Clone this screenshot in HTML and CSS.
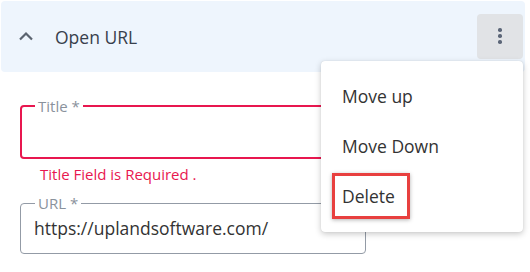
FILE: index.html
```html
<!DOCTYPE html>
<html lang="en">
<head>
  <meta charset="UTF-8" />
  <title>Open URL</title>
  <link rel="stylesheet" href="styles.css">
</head>
<body>

<div class="panel">
  <div class="panel-head">
    <svg class="chevron" width="16" height="10" viewBox="0 0 16 10">
      <path d="M2 8.5 L8 2.5 L14 8.5" fill="none" stroke="#5b6470" stroke-width="2.2" />
    </svg>
    <span class="panel-title">Open URL</span>
    <button class="kebab" type="button">
      <span class="dot"></span><span class="dot"></span><span class="dot"></span>
    </button>
  </div>

  <div class="form">
    <fieldset class="field invalid">
      <legend>Title *</legend>
      <div class="field-value"></div>
    </fieldset>
    <div class="error">Title Field is Required .</div>

    <fieldset class="field">
      <legend>URL *</legend>
      <div class="field-value">https://uplandsoftware.com/</div>
    </fieldset>
  </div>

  <!-- menu opened from the kebab button -->
  <ul class="menu">
    <li class="menu-item">Move up</li>
    <li class="menu-item">Move Down</li>
    <li class="menu-item"><span class="mark">Delete</span></li>
  </ul>
</div>

</body>
</html>
```

FILE: styles.css
```css
* {
  margin: 0;
  padding: 0;
  box-sizing: border-box;
}

html, body {
  background: #fff;
  font-family: 'Open Sans', 'Noto Sans', sans-serif;
  color: #333;
}

.panel {
  position: relative;
  width: 530px;
  height: 272px;
  overflow: hidden;
}

.panel-head {
  display: flex;
  align-items: center;
  height: 71px;
  margin: 1px 5px 0 1px;
  padding: 0 2px 0 17px;
  background: #eef5fd;
  border-radius: 4px;
}

.chevron {
  display: block;
  margin-top: -2px;
}

.panel-title {
  margin-left: 21px;
  font-size: 17.5px;
  color: #38404c;
  flex: 1;
}

.kebab {
  width: 46px;
  height: 45px;
  margin-top: -1px;
  border: none;
  border-radius: 4px;
  background: #e1e3e6;
  display: flex;
  flex-direction: column;
  align-items: center;
  justify-content: center;
  gap: 2.5px;
}

.dot {
  width: 3.5px;
  height: 3.5px;
  border-radius: 50%;
  background: #5c6678;
}

.form {
  padding: 26px 0 0 20px;
}

.field {
  width: 346px;
  border: 1px solid #939ba6;
  border-radius: 4px;
  padding: 0 12px 13px 14px;
}

.field legend {
  padding: 0 3px;
  font-size: 15px;
  line-height: 16px;
  color: #8a929c;
}

.field-value {
  margin-top: 6px;
  height: 23px;
  font-size: 17.5px;
  line-height: 23px;
  color: #333;
  margin-left: -1px;
}

.field.invalid {
  border: 2px solid #e8174f;
  padding: 0 12px 14px 13px;
}

.error {
  margin: 5px 0 11px 20px;
  font-size: 15px;
  line-height: 20px;
  color: #e8174f;
}

.menu {
  position: absolute;
  left: 321px;
  top: 61px;
  width: 202px;
  height: 171px;
  list-style: none;
  padding: 10px 0 11px;
  background: #fff;
  border-radius: 4px;
  box-shadow: 0 2px 6px rgba(0, 0, 0, 0.22), 0 0 1px rgba(0, 0, 0, 0.15);
}

.menu-item {
  display: flex;
  align-items: center;
  height: 50px;
  padding-left: 21px;
  font-size: 17.5px;
  line-height: 23px;
  color: #333;
}

.mark {
  margin-left: -10px;
  padding: 0 12px 0 7px;
  line-height: 40px;
  border: 3px solid #e8403f;
  box-shadow: 0 1px 4px rgba(0, 0, 0, 0.3);
}
```
